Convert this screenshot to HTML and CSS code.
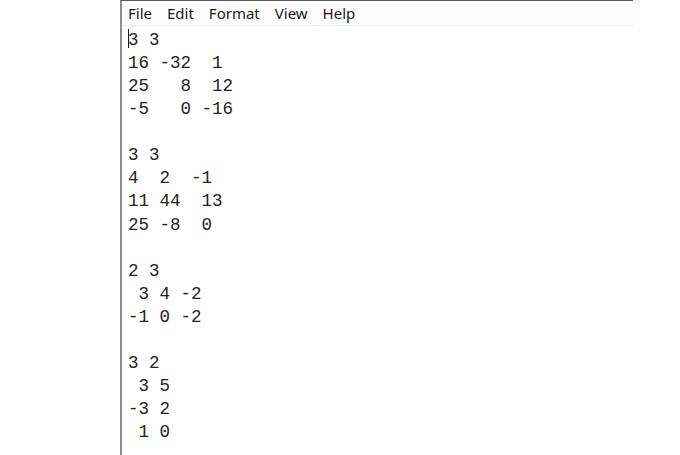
FILE: index.html
```html
<!DOCTYPE html>
<html lang="en">

<head>
    <meta charset="UTF-8">
    <meta name="viewport" content="width=device-width, initial-scale=1.0">
    <title>Untitled - Notepad</title>
    <link rel="stylesheet" href="styles.css">
</head>

<body>
    <div class="window">
        <nav class="menubar">
            <span class="menu_item">File</span>
            <span class="menu_item">Edit</span>
            <span class="menu_item">Format</span>
            <span class="menu_item">View</span>
            <span class="menu_item">Help</span>
        </nav>
        <pre class="editor"><span class="caret"></span>3 3
16 -32  1
25   8  12
-5   0 -16

3 3
4  2  -1
11 44  13
25 -8  0

2 3
 3 4 -2
-1 0 -2

3 2
 3 5
-3 2
 1 0</pre>
    </div>
</body>

</html>
```

FILE: styles.css
```css
* {
    box-sizing: border-box;
    margin: 0;
    padding: 0;
}

body {
    width: 680px;
    height: 455px;
    background-color: #ffffff;
    overflow: hidden;
}

.window {
    width: 513px;
    height: 455px;
    margin-left: 120px;
    border-left: 2px solid #8c8c8c;
    border-top: 1px solid #5a5a5a;
}

.menubar {
    height: 25px;
    display: flex;
    align-items: center;
    gap: 15px;
    padding-left: 6px;
    background-color: #fdfdfd;
    border-bottom: 1px solid #eeeeee;
    font-family: "Noto Sans", "Open Sans", sans-serif;
    font-size: 15px;
    color: #1a1a1a;
}

.editor {
    padding: 3px 0 0 6px;
    font-family: "Liberation Mono", "DejaVu Sans Mono", monospace;
    font-size: 17.5px;
    line-height: 23.06px;
    color: #222222;
}

.caret {
    display: inline-block;
    width: 1px;
    height: 19px;
    margin-right: -1px;
    vertical-align: -3px;
    background-color: #1a1a1a;
}
```
